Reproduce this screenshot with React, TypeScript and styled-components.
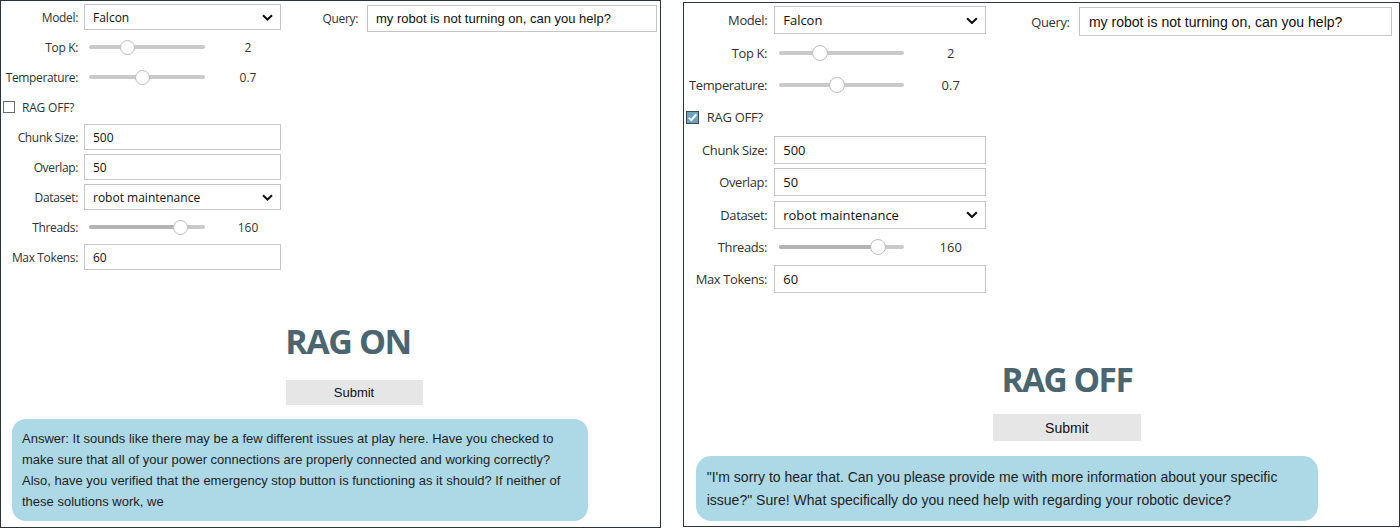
import React from "react";
import styled, { createGlobalStyle } from "styled-components";

const GlobalStyle = createGlobalStyle`
  html, body { margin: 0; padding: 0; background: #ffffff; }
  body { overflow: hidden; }
  *, *::before, *::after { box-sizing: border-box; }
`;

const UI_FONT = `"Open Sans", "Noto Sans", sans-serif`;
const TEXT_FONT = `"Liberation Sans", Arial, sans-serif`;

const Page = styled.main`
  display: flex;
  align-items: flex-start;
  gap: 22px;
  width: 1400px;
  height: 528px;
`;

const Panel = styled.section<{ $width: number; $height: number; $top: number }>`
  flex: none;
  width: ${(p) => p.$width}px;
  height: ${(p) => p.$height}px;
  margin-top: ${(p) => p.$top}px;
  border: 1px solid #2d3538;
  background: #ffffff;
  overflow: hidden;
`;

const Content = styled.div<{ $zoom: number }>`
  zoom: ${(p) => p.$zoom};
  padding-top: 3px;
  display: flex;
  flex-direction: column;
`;

const Controls = styled.div`
  display: flex;
  align-items: flex-start;
`;

const Form = styled.div`
  display: grid;
  grid-template-columns: 77px 197px;
  grid-auto-rows: 26px;
  column-gap: 6px;
  row-gap: 4px;
  width: 280px;
  flex: none;
`;

const Label = styled.label`
  display: flex;
  align-items: center;
  justify-content: flex-end;
  white-space: nowrap;
  font-family: ${UI_FONT};
  font-size: 12px;
  letter-spacing: -0.35px;
  color: #333333;
`;

const Field = styled.div<{ $mono?: boolean }>`
  display: flex;
  align-items: center;
  height: 100%;
  padding: 0 7px 0 8px;
  border: 1px solid #c6c6c6;
  background: #ffffff;
  font-family: ${(p) => (p.$mono ? TEXT_FONT : UI_FONT)};
  font-size: ${(p) => (p.$mono ? 13 : 12)}px;
  color: #111111;
  white-space: nowrap;
`;

const SelectField = styled(Field)`
  justify-content: space-between;
`;

const QueryBlock = styled.div`
  display: grid;
  grid-template-columns: 77px 290px;
  column-gap: 9px;
  height: 27px;
  margin-top: 1px;
`;

const SliderCell = styled.div`
  display: flex;
  align-items: center;
  height: 100%;
`;

const Track = styled.div`
  position: relative;
  flex: none;
  width: 116px;
  height: 4px;
  margin-left: 5px;
  border-radius: 2px;
  background: #c9c9c9;
`;

const Fill = styled.div`
  height: 100%;
  border-radius: 2px;
  background: #b4b4b4;
`;

const Handle = styled.div`
  position: absolute;
  top: 50%;
  width: 15px;
  height: 15px;
  margin: -7.5px 0 0 -7.5px;
  border-radius: 50%;
  border: 1px solid #bdbdbd;
  background: #ffffff;
`;

const Readout = styled.span`
  flex: 1;
  padding-left: 10px;
  text-align: center;
  font-family: ${UI_FONT};
  font-size: 12px;
  color: #333333;
`;

const CheckRow = styled.div`
  grid-column: 1 / -1;
  display: flex;
  align-items: center;
  gap: 7px;
  padding-left: 2px;
  font-family: ${UI_FONT};
  font-size: 12px;
  letter-spacing: -0.2px;
  color: #333333;
`;

const Box = styled.span<{ $checked: boolean }>`
  display: inline-flex;
  align-items: center;
  justify-content: center;
  width: 12px;
  height: 12px;
  border: 1px solid ${(p) => (p.$checked ? "#3d4a52" : "#6b6b6b")};
  background: ${(p) => (p.$checked ? "#6fa3c0" : "#ffffff")};
`;

const Center = styled.div`
  display: flex;
  flex-direction: column;
  align-items: center;
  padding-left: 47px;
`;

const Title = styled.h1<{ $size: number; $gap: number; $shift: number }>`
  margin: ${(p) => p.$gap}px ${(p) => p.$shift}px 0 0;
  font-family: "Open Sans", "Noto Sans", sans-serif;
  font-weight: 700;
  font-size: ${(p) => p.$size}px;
  line-height: ${(p) => Math.round(p.$size * 1.18)}px;
  letter-spacing: -1.4px;
  color: #4a6570;
`;

const SubmitButton = styled.button<{ $gap: number }>`
  margin-top: ${(p) => p.$gap}px;
  width: 137px;
  height: 25px;
  padding: 0;
  border: none;
  background: #e6e6e6;
  font-family: ${TEXT_FONT};
  font-size: 13px;
  color: #111111;
`;

const Bubble = styled.p`
  margin: 14px 0 0 11px;
  width: 576px;
  padding: 9px 10px;
  border-radius: 14px;
  background: #add8e6;
  font-family: ${TEXT_FONT};
  font-size: 13px;
  line-height: 21px;
  color: #1f1f1f;
`;

const Chevron = () => (
  <svg width="11" height="7" viewBox="0 0 11 7" aria-hidden="true">
    <path d="M1 1.2 L5.5 5.5 L10 1.2" fill="none" stroke="#111" strokeWidth="2" />
  </svg>
);

const Check = () => (
  <svg width="10" height="10" viewBox="0 0 10 10" aria-hidden="true">
    <path d="M1.5 5.2 L4 7.6 L8.6 2.2" fill="none" stroke="#ffffff" strokeWidth="1.8" />
  </svg>
);

type SliderProps = { label: string; frac: number; value: string; filled?: boolean };

const SliderRow = ({ label, frac, value, filled }: SliderProps) => (
  <>
    <Label>{label}</Label>
    <SliderCell>
      <Track>
        {filled && <Fill style={{ width: `${frac * 100}%` }} />}
        <Handle style={{ left: `${frac * 100}%` }} />
      </Track>
      <Readout>{value}</Readout>
    </SliderCell>
  </>
);

type PanelConfig = {
  width: number;
  height: number;
  top: number;
  zoom: number;
  checked: boolean;
  title: string;
  titleSize: number;
  titleGap: number;
  titleShift: number;
  submitGap: number;
  answer: string;
};

const panels: PanelConfig[] = [
  {
    width: 661,
    height: 528,
    top: 0,
    zoom: 1,
    checked: false,
    title: "RAG ON",
    titleSize: 34,
    titleGap: 51,
    titleShift: 12,
    submitGap: 19,
    answer:
      "Answer: It sounds like there may be a few different issues at play here. Have you checked to make sure that all of your power connections are properly connected and working correctly? Also, have you verified that the emergency stop button is functioning as it should? If neither of these solutions work, we",
  },
  {
    width: 717,
    height: 525,
    top: 2,
    zoom: 1.08,
    checked: true,
    title: "RAG OFF",
    titleSize: 31,
    titleGap: 62,
    titleShift: 0,
    submitGap: 13,
    answer:
      "\"I'm sorry to hear that. Can you please provide me with more information about your specific issue?\" Sure! What specifically do you need help with regarding your robotic device?",
  },
];

const RagPanel = ({ cfg }: { cfg: PanelConfig }) => (
  <Panel $width={cfg.width} $height={cfg.height} $top={cfg.top}>
    <Content $zoom={cfg.zoom}>
      <Controls>
        <Form>
          <Label>Model:</Label>
          <SelectField>
            <span>Falcon</span>
            <Chevron />
          </SelectField>
          <SliderRow label="Top K:" frac={0.33} value="2" />
          <SliderRow label="Temperature:" frac={0.46} value="0.7" />
          <CheckRow>
            <Box $checked={cfg.checked}>{cfg.checked && <Check />}</Box>
            <span>RAG OFF?</span>
          </CheckRow>
          <Label>Chunk Size:</Label>
          <Field>500</Field>
          <Label>Overlap:</Label>
          <Field>50</Field>
          <Label>Dataset:</Label>
          <SelectField>
            <span>robot maintenance</span>
            <Chevron />
          </SelectField>
          <SliderRow label="Threads:" frac={0.79} value="160" filled />
          <Label>Max Tokens:</Label>
          <Field>60</Field>
        </Form>
        <QueryBlock>
          <Label>Query:</Label>
          <Field $mono>my robot is not turning on, can you help?</Field>
        </QueryBlock>
      </Controls>
      <Center>
        <Title $size={cfg.titleSize} $gap={cfg.titleGap} $shift={cfg.titleShift}>
          {cfg.title}
        </Title>
        <SubmitButton $gap={cfg.submitGap}>Submit</SubmitButton>
      </Center>
      <Bubble>{cfg.answer}</Bubble>
    </Content>
  </Panel>
);

export default function App() {
  return (
    <>
      <GlobalStyle />
      <Page>
        {panels.map((cfg) => (
          <RagPanel key={cfg.title} cfg={cfg} />
        ))}
      </Page>
    </>
  );
}
